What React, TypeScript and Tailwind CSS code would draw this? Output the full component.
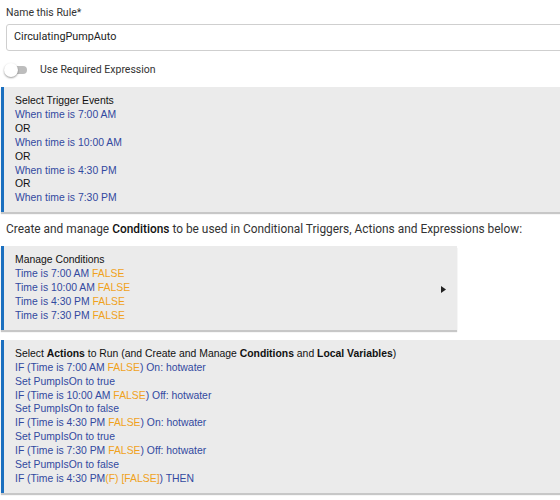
import React from "react";

const BLUE = "text-[#3249a0]";
const ORANGE = "text-[#f0a21c]";

const Panel: React.FC<{ className?: string; children: React.ReactNode }> = ({ className, children }) => (
  <div
    className={`bg-[#ebebeb] border-l-[3px] border-[#1b6fbf] pl-[11px] pt-[7px] pb-[7px] shadow-[0_2px_1px_rgba(0,0,0,0.22)] font-['Liberation_Sans',Arial,sans-serif] text-[10.4px] leading-[13.9px] ${className ?? ""}`}
  >
    {children}
  </div>
);

const False: React.FC<{ text?: string }> = ({ text = "FALSE" }) => <span className={ORANGE}>{text}</span>;

export default function App() {
  const triggers = ["7:00 AM", "10:00 AM", "4:30 PM", "7:30 PM"];
  const actions: React.ReactNode[] = [
    <>IF (Time is 7:00 AM <False />) On: hotwater</>,
    <>Set PumpIsOn to true</>,
    <>IF (Time is 10:00 AM <False />) Off: hotwater</>,
    <>Set PumpIsOn to false</>,
    <>IF (Time is 4:30 PM <False />) On: hotwater</>,
    <>Set PumpIsOn to true</>,
    <>IF (Time is 7:30 PM <False />) Off: hotwater</>,
    <>Set PumpIsOn to false</>,
    <>IF (Time is 4:30 PM<False text="(F)" /> <False text="[FALSE]" />) THEN</>,
  ];

  return (
    <div className="w-[560px] h-[500px] overflow-hidden bg-white font-['Roboto',sans-serif] text-[#333]">
      <div className="pl-[6px] pt-[6px]">
        <div className="text-[10.5px] leading-[14px] text-[#333]">Name this Rule*</div>
        <div className="mt-[4px] w-[580px] h-[27px] border border-[#cfcfcf] rounded-[3px] flex items-center pl-[7px] text-[10.8px] text-[#222]">
          CirculatingPumpAuto
        </div>
        <div className="mt-[12px] flex items-center h-[14px]">
          <div className="relative w-[24px] h-[14px] -ml-[2px]">
            <div className="absolute left-[5px] top-[3px] w-[18px] h-[8px] rounded-full bg-[#bdbdbd]" />
            <div className="absolute left-0 top-0 w-[14px] h-[14px] rounded-full bg-white shadow-[0_1px_2px_rgba(0,0,0,0.4)]" />
          </div>
          <span className="ml-[12px] text-[10.5px] text-[#333]">Use Required Expression</span>
        </div>
      </div>

      <Panel className="mt-[10px] ml-px">
        <div className="text-[#111]">Select Trigger Events</div>
        {triggers.map((t, i) => (
          <React.Fragment key={t}>
            {i > 0 && <div className="text-[#111]">OR</div>}
            <div className={BLUE}>When time is {t}</div>
          </React.Fragment>
        ))}
      </Panel>

      <div className="pl-[6px] mt-[10px] text-[11.9px] leading-[14px] text-[#333]">
        Create and manage <span className="font-medium text-[#111]">Conditions</span> to be used in Conditional Triggers, Actions and Expressions below:
      </div>

      <Panel className="mt-[10px] ml-px w-[456px] flex items-center justify-between pr-[11px]">
        <div>
          <div className="text-[#111]">Manage Conditions</div>
          {triggers.map((t) => (
            <div key={t} className={BLUE}>
              Time is {t} <False />
            </div>
          ))}
        </div>
        <svg width="5" height="7" viewBox="0 0 5 7" className="mt-[2px]">
          <path d="M0 0 L5 3.5 L0 7 Z" fill="#222" />
        </svg>
      </Panel>

      <Panel className="mt-[10px] ml-px">
        <div className="text-[#111]">
          Select <b>Actions</b> to Run (and Create and Manage <b>Conditions</b> and <b>Local Variables</b>)
        </div>
        {actions.map((a, i) => (
          <div key={i} className={BLUE}>
            {a}
          </div>
        ))}
      </Panel>
    </div>
  );
}
